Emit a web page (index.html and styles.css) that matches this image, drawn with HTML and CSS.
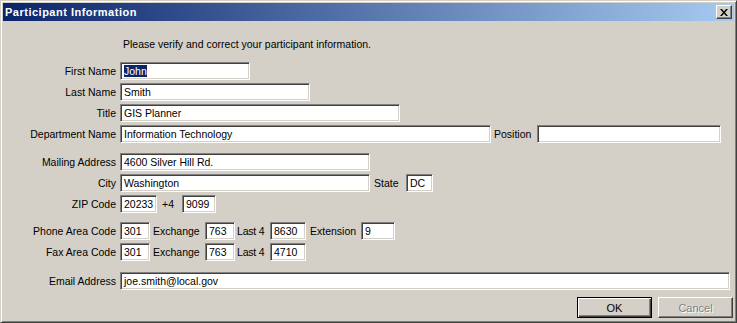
FILE: index.html
```html
<!doctype html>
<html lang="en">

<head>
    <meta charset="utf-8">
    <title>Participant Information</title>
    <link rel="stylesheet" href="styles.css">
</head>

<body>
    <div class="dlg-window">
        <div class="dlg-titlebar">
            <span class="dlg-title">Participant Information</span>
            <button class="dlg-close" aria-label="Close">
                <svg width="8" height="7" viewBox="0 0 8 7">
                    <path d="M0 0h2l2 2.5L6 0h2L5 3.5 8 7H6L4 4.5 2 7H0l3-3.5z" fill="#000"/>
                </svg>
            </button>
        </div>

        <div class="dlg-body">
            <p class="dlg-intro">Please verify and correct your participant information.</p>

            <!-- name / title -->
            <div class="dlg-group dlg-group-1">
                <div class="dlg-row">
                    <span class="dlg-label">First Name</span>
                    <div class="dlg-field w-first"><span class="dlg-sel">John</span></div>
                </div>
                <div class="dlg-row">
                    <span class="dlg-label">Last Name</span>
                    <div class="dlg-field w-last">Smith</div>
                </div>
                <div class="dlg-row">
                    <span class="dlg-label">Title</span>
                    <div class="dlg-field w-title">GIS Planner</div>
                </div>
                <div class="dlg-row">
                    <span class="dlg-label">Department Name</span>
                    <div class="dlg-field w-dept">Information Technology</div>
                    <span class="dlg-inlabel w-lbl-pos">Position</span>
                    <div class="dlg-field w-pos"></div>
                </div>
            </div>

            <!-- address -->
            <div class="dlg-group dlg-group-2">
                <div class="dlg-row">
                    <span class="dlg-label">Mailing Address</span>
                    <div class="dlg-field w-addr">4600 Silver Hill Rd.</div>
                </div>
                <div class="dlg-row">
                    <span class="dlg-label">City</span>
                    <div class="dlg-field w-addr">Washington</div>
                    <span class="dlg-inlabel w-lbl-state">State</span>
                    <div class="dlg-field w-state">DC</div>
                </div>
                <div class="dlg-row">
                    <span class="dlg-label">ZIP Code</span>
                    <div class="dlg-field w-zip">20233</div>
                    <span class="dlg-inlabel w-lbl-plus">+4</span>
                    <div class="dlg-field w-zip4">9099</div>
                </div>
            </div>

            <!-- phone / fax -->
            <div class="dlg-group dlg-group-3">
                <div class="dlg-row">
                    <span class="dlg-label">Phone Area Code</span>
                    <div class="dlg-field w-area">301</div>
                    <span class="dlg-inlabel w-lbl-exch">Exchange</span>
                    <div class="dlg-field w-exch">763</div>
                    <span class="dlg-inlabel w-lbl-last">Last 4</span>
                    <div class="dlg-field w-last4">8630</div>
                    <span class="dlg-inlabel w-lbl-ext">Extension</span>
                    <div class="dlg-field w-ext">9</div>
                </div>
                <div class="dlg-row">
                    <span class="dlg-label">Fax Area Code</span>
                    <div class="dlg-field w-area">301</div>
                    <span class="dlg-inlabel w-lbl-exch">Exchange</span>
                    <div class="dlg-field w-exch">763</div>
                    <span class="dlg-inlabel w-lbl-last">Last 4</span>
                    <div class="dlg-field w-last4">4710</div>
                </div>
            </div>

            <!-- email -->
            <div class="dlg-group dlg-group-4">
                <div class="dlg-row">
                    <span class="dlg-label">Email Address</span>
                    <div class="dlg-field w-email">joe.smith@local.gov</div>
                </div>
            </div>

            <div class="dlg-actions">
                <button class="dlg-btn dlg-btn-default">OK</button>
                <button class="dlg-btn" disabled>Cancel</button>
            </div>
        </div>
    </div>
</body>

</html>
```

FILE: styles.css
```css
html,
body {
    margin: 0;
    background-color: #d4d0c8;
}

body {
    font-family: "Liberation Sans", Arial, sans-serif;
    font-size: 10.5px;
    color: #000;
}

/* window frame */
.dlg-window {
    width: 737px;
    height: 323px;
    box-sizing: border-box;
    padding: 2px;
    background-color: #d4d0c8;
    border: 1px solid;
    border-color: #d4d0c8 #404040 #404040 #d4d0c8;
    box-shadow: inset 1px 1px #fff, inset -1px -1px #808080;
    display: flex;
    flex-direction: column;
}

.dlg-titlebar {
    height: 18px;
    display: flex;
    align-items: center;
    justify-content: space-between;
    padding-left: 2px;
    padding-right: 2px;
    background: linear-gradient(to right, #0a246a, #a6caf0);
}

.dlg-title {
    color: #fff;
    font-weight: bold;
    font-size: 11px;
    letter-spacing: 0.5px;
}

.dlg-close {
    width: 16px;
    height: 14px;
    padding: 0;
    margin: 0;
    display: flex;
    align-items: center;
    justify-content: center;
    background-color: #d4d0c8;
    border: 1px solid;
    border-color: #fff #404040 #404040 #fff;
    box-shadow: inset -1px -1px #808080;
}

/* body */
.dlg-body {
    flex: 1;
    display: flex;
    flex-direction: column;
}

.dlg-intro {
    margin: 16px 0 0 120px;
    line-height: 14px;
}

.dlg-group {
    display: flex;
    flex-direction: column;
    gap: 3px;
}

.dlg-group-1 {
    margin-top: 11px;
}

.dlg-group-2 {
    margin-top: 10px;
}

.dlg-group-3 {
    margin-top: 9px;
}

.dlg-group-4 {
    margin-top: 11px;
}

.dlg-row {
    display: flex;
    align-items: center;
    height: 18px;
}

.dlg-label {
    width: 117px;
    padding-right: 4px;
    box-sizing: border-box;
    text-align: right;
    white-space: nowrap;
}

.dlg-inlabel {
    box-sizing: border-box;
    padding-left: 4px;
    white-space: nowrap;
}

.dlg-field {
    height: 18px;
    box-sizing: border-box;
    padding: 1px 0 0 3px;
    line-height: 14px;
    background-color: #fff;
    border: 1px solid;
    border-color: #808080 #fff #fff #808080;
    box-shadow: inset 1px 1px #404040, inset -1px -1px #d4d0c8;
    white-space: nowrap;
    overflow: hidden;
}

.dlg-sel {
    background-color: #0a246a;
    color: #fff;
}

/* field widths */
.w-first { width: 130px; }
.w-last { width: 190px; }
.w-title { width: 280px; }
.w-dept { width: 371px; }
.w-pos { width: 184px; }
.w-addr { width: 250px; }
.w-state { width: 27px; }
.w-zip { width: 37px; }
.w-zip4 { width: 34px; }
.w-area { width: 30px; }
.w-exch { width: 30px; }
.w-last4 { width: 36px; }
.w-ext { width: 34px; }
.w-email { width: 610px; }

/* inline label boxes */
.w-lbl-pos { width: 46px; padding-left: 3px; }
.w-lbl-state { width: 36px; }
.w-lbl-plus { width: 25px; padding-left: 5px; }
.w-lbl-exch { width: 55px; padding-left: 3px; }
.w-lbl-last { width: 35px; padding-left: 2px; letter-spacing: -0.2px; }
.w-lbl-ext { width: 55px; padding-left: 4px; }

/* buttons */
.dlg-actions {
    margin-top: 7px;
    display: flex;
    justify-content: flex-end;
    gap: 6px;
    padding-right: 1px;
}

.dlg-btn {
    width: 75px;
    height: 21px;
    padding: 0;
    font-family: "Liberation Sans", Arial, sans-serif;
    font-size: 11px;
    color: #000;
    background-color: #d4d0c8;
    border: 1px solid;
    border-color: #fff #404040 #404040 #fff;
    box-shadow: inset -1px -1px #808080;
}

.dlg-btn-default {
    border-color: #000;
    box-shadow: inset 1px 1px #fff, inset -1px -1px #404040, inset -2px -2px #808080;
}

.dlg-btn:disabled {
    color: #808080;
    text-shadow: 1px 1px #fff;
}
```
